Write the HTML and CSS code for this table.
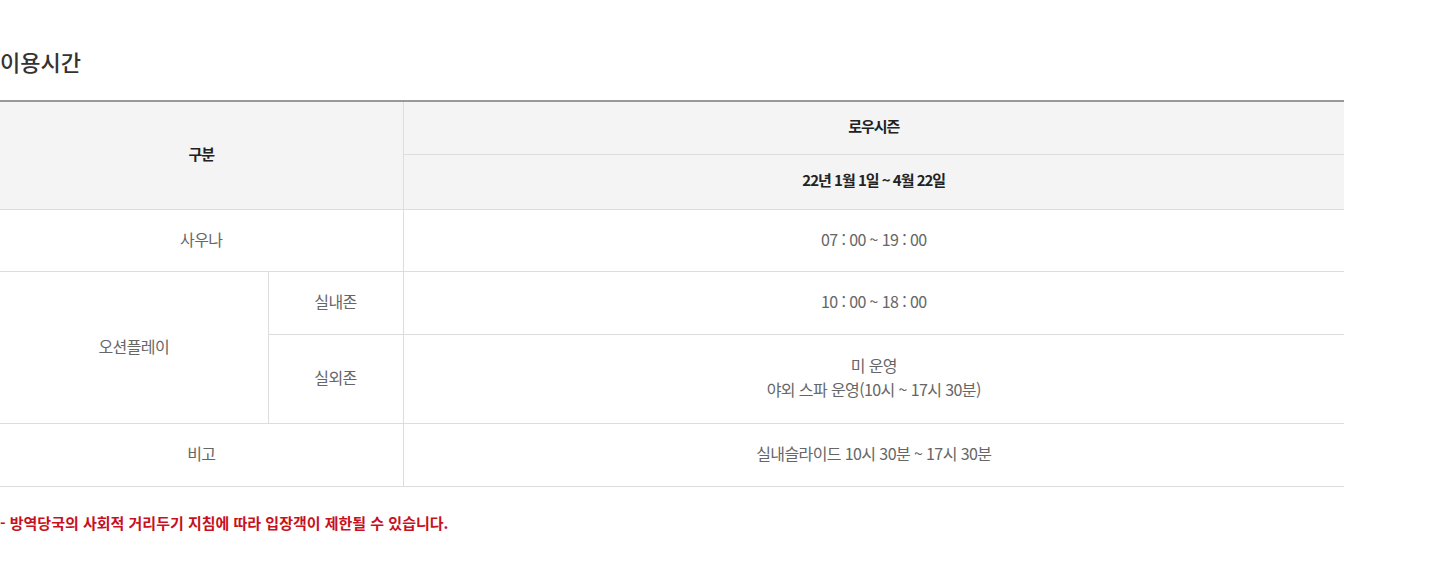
FILE: index.html
```html
<!DOCTYPE html>
<html lang="ko">
  <head>
    <meta charset="UTF-8" />
    <meta name="viewport" content="width=device-width, initial-scale=1.0" />
    <title>이용시간</title>
    <link rel="stylesheet" href="styles.css">
  </head>
  <body class="all">
    <div class="time-info">
      <h2 class="time-title">이용시간</h2>
      <table class="time-table">
        <colgroup>
          <col class="col-a" />
          <col class="col-b" />
          <col />
        </colgroup>
        <thead>
          <tr class="head-row first">
            <th colspan="2" rowspan="2">구분</th>
            <th>로우시즌</th>
          </tr>
          <tr class="head-row">
            <th>22년 1월 1일 ~ 4월 22일</th>
          </tr>
        </thead>
        <tbody>
          <tr class="row short">
            <td colspan="2">사우나</td>
            <td>07 : 00 ~ 19 : 00</td>
          </tr>
          <tr class="row">
            <td rowspan="2">오션플레이</td>
            <td>실내존</td>
            <td>10 : 00 ~ 18 : 00</td>
          </tr>
          <tr class="row tall">
            <td>실외존</td>
            <td>미 운영<br />야외 스파 운영(10시 ~ 17시 30분)</td>
          </tr>
          <tr class="row">
            <td colspan="2">비고</td>
            <td>실내슬라이드 10시 30분 ~ 17시 30분</td>
          </tr>
        </tbody>
      </table>
      <p class="notice">- 방역당국의 사회적 거리두기 지침에 따라 입장객이 제한될 수 있습니다.</p>
    </div>
  </body>
</html>
```

FILE: styles.css
```css
body {
  margin: 0;
  font-family: "Noto Sans CJK KR", "Noto Sans", sans-serif;
}

.all {
  background-color: white;
}

.time-info {
  width: 1344px;
  padding-top: 46px;
}

.time-title {
  margin: 0 0 24px;
  font-size: 22px;
  line-height: 30px;
  font-weight: 500;
  color: #333;
}

.time-table {
  width: 100%;
  border-collapse: collapse;
  border-top: 2px solid #999;
  table-layout: fixed;
}

.col-a {
  width: 268px;
}

.col-b {
  width: 135px;
}

.time-table th,
.time-table td {
  border: 1px solid #ddd;
  padding: 0 0 3px;
  text-align: center;
  line-height: 24px;
}

.time-table tr > :first-child {
  border-left: none;
}

.time-table tr > :last-child {
  border-right: none;
}

.time-table th {
  background-color: #f4f4f4;
  color: #222;
  font-size: 15px;
  font-weight: bold;
  letter-spacing: -1px;
}

.time-table td {
  color: #666;
  font-size: 16px;
  letter-spacing: -0.6px;
}

.head-row {
  height: 55px;
}

.head-row.first {
  height: 53px;
}

.row {
  height: 63px;
}

.row.short {
  height: 62px;
}

.row.tall {
  height: 89px;
}

.notice {
  margin: 26px 0 0;
  font-size: 15px;
  line-height: 20px;
  font-weight: bold;
  color: #c8101e;
}
```
